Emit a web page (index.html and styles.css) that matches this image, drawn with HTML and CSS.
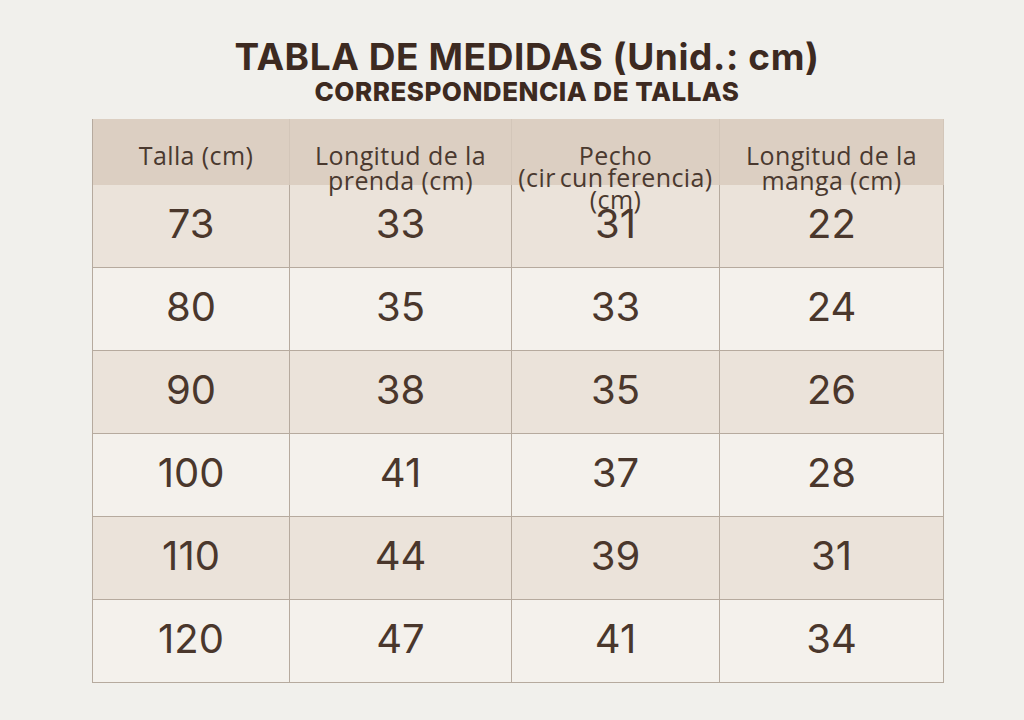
FILE: index.html
```html
<!DOCTYPE html>
<html lang="es">
<head>
<meta charset="utf-8">
<title>Tabla de medidas</title>
<link rel="stylesheet" href="styles.css">
</head>
<body>
<main class="page">
  <header class="titles">
    <h1 class="title">TABLA DE MEDIDAS (Unid.: cm)</h1>
    <h2 class="subtitle">CORRESPONDENCIA DE TALLAS</h2>
  </header>
  <section class="chart">
    <div class="head"><span class="head-text head-one">Talla (cm)</span></div>
    <div class="head"><span class="head-text head-two">Longitud de la<br>prenda (cm)</span></div>
    <div class="head"><span class="head-text head-three">Pecho<br>(cir cun ferencia)<br>(cm)</span></div>
    <div class="head"><span class="head-text head-two">Longitud de la<br>manga (cm)</span></div>

    <div class="cell shade">73</div><div class="cell shade">33</div><div class="cell shade">31</div><div class="cell shade">22</div>
    <div class="cell">80</div><div class="cell">35</div><div class="cell">33</div><div class="cell">24</div>
    <div class="cell shade">90</div><div class="cell shade">38</div><div class="cell shade">35</div><div class="cell shade">26</div>
    <div class="cell">100</div><div class="cell">41</div><div class="cell">37</div><div class="cell">28</div>
    <div class="cell shade">110</div><div class="cell shade">44</div><div class="cell shade">39</div><div class="cell shade">31</div>
    <div class="cell">120</div><div class="cell">47</div><div class="cell">41</div><div class="cell">34</div>
  </section>
</main>
</body>
</html>
```

FILE: styles.css
```css
html, body {
  margin: 0;
  padding: 0;
}
body {
  width: 1024px;
  height: 720px;
  background: #f1f0ec;
  overflow: hidden;
}
.page {
  display: flex;
  flex-direction: column;
  padding-top: 36px;
}
.titles {
  display: flex;
  flex-direction: column;
  align-items: center;
  padding-left: 30px;
  color: #3d2a21;
  font-family: Inter, "Liberation Sans", sans-serif;
}
.title {
  margin: 0;
  font-size: 37px;
  line-height: 42px;
  font-weight: 700;
  letter-spacing: 0.6px;
}
.subtitle {
  margin: 0;
  font-size: 26px;
  line-height: 28px;
  font-weight: 800;
  letter-spacing: 0.5px;
}
.chart {
  margin: 13px 0 0 92px;
  width: 851px;
  display: grid;
  grid-template-columns: 197px 222px 208px 224px;
  grid-template-rows: 66px repeat(6, 83px);
  border-left: 1px solid #b6aa9e;
  box-sizing: border-box;
}
.head {
  background: #dccfc2;
  border-right: 1px solid #d3c6b9;
  display: flex;
  justify-content: center;
  align-items: flex-start;
  padding-top: 25px;
  font-family: "Open Sans", "Liberation Sans", sans-serif;
  font-size: 25px;
  line-height: 23px;
  letter-spacing: 0.4px;
  color: #4a392f;
  text-align: center;
}
.head:last-child {
  border-right-color: #b6aa9e;
}
.head-text {
  position: relative;
  z-index: 1;
  white-space: nowrap;
}
.head-one {
  margin-left: 10px;
}
.head-two {
  line-height: 25px;
  margin-top: -1px;
}
.head-three {
  line-height: 22px;
  word-spacing: -3px;
}
.cell {
  background: #f4f1ec;
  border-right: 1px solid #b6aa9e;
  border-bottom: 1px solid #b6aa9e;
  display: flex;
  align-items: center;
  justify-content: center;
  padding-bottom: 6px;
  font-family: Inter, "Liberation Sans", sans-serif;
  font-size: 40px;
  color: #4a372c;
}
.cell.shade {
  background: #ebe3da;
}
```
